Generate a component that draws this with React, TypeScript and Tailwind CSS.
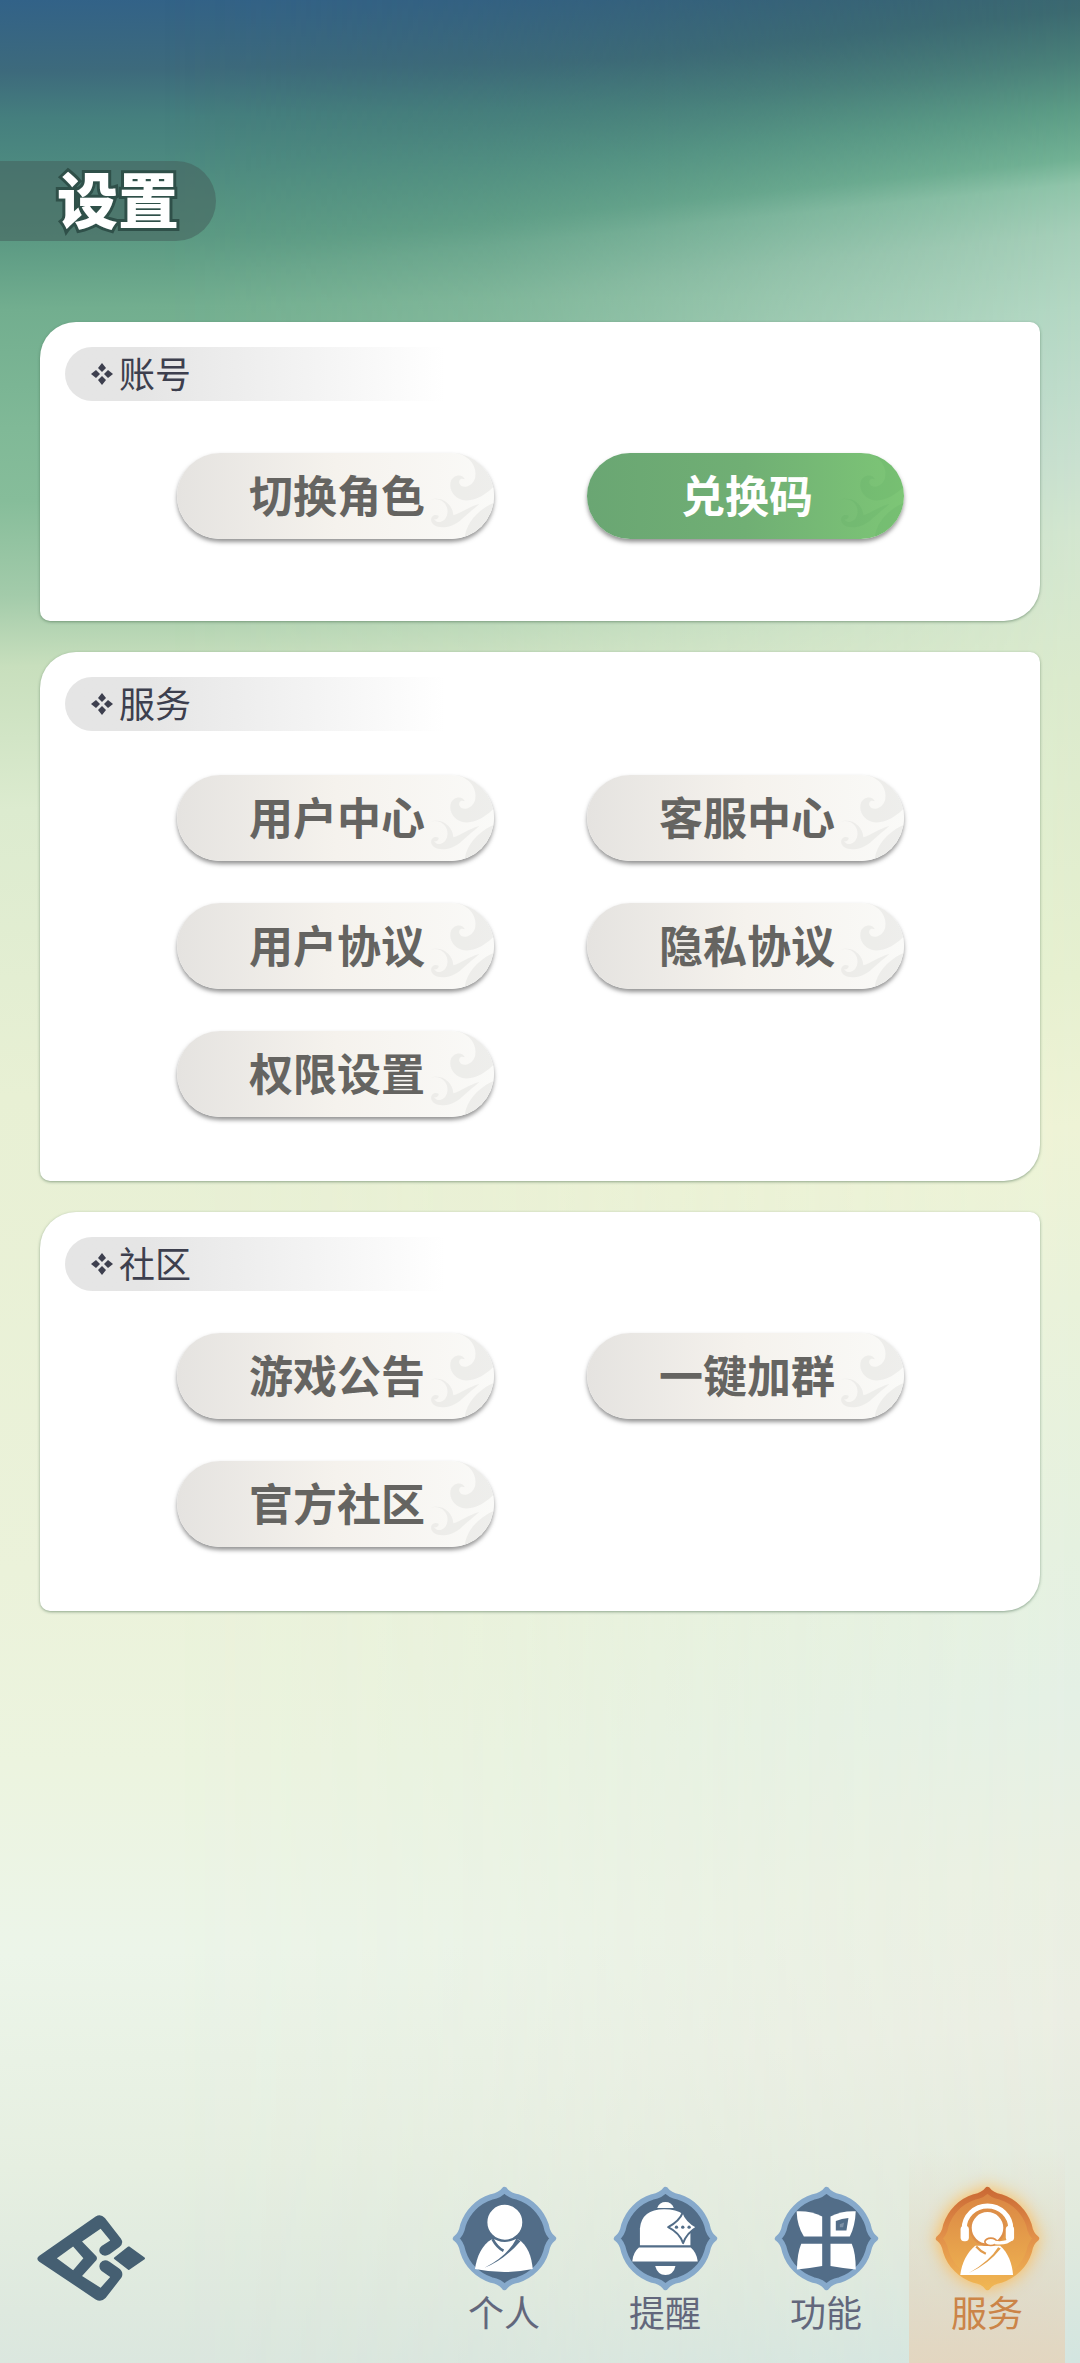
import React, { useState } from 'react';
import clsx from 'clsx';

interface Action {
  label: string;
  primary?: boolean;
}

interface Section {
  title: string;
  actions: Action[];
  spacing: string;
}

const sections: Section[] = [
  {
    title: '账号',
    actions: [{ label: '切换角色' }, { label: '兑换码', primary: true }],
    spacing: 'pt-[52px] pb-[82px]',
  },
  {
    title: '服务',
    actions: [
      { label: '用户中心' },
      { label: '客服中心' },
      { label: '用户协议' },
      { label: '隐私协议' },
      { label: '权限设置' },
    ],
    spacing: 'pt-11 pb-16',
  },
  {
    title: '社区',
    actions: [{ label: '游戏公告' }, { label: '一键加群' }, { label: '官方社区' }],
    spacing: 'pt-[42px] pb-16',
  },
];

const BADGE =
  'M0 -147C7 -137 18 -129 40 -125A131 131 0 0 1 125 -40C129 -18 137 -7 147 0C137 7 129 18 125 40A131 131 0 0 1 40 125C18 129 7 137 0 147C-7 137 -18 129 -40 125A131 131 0 0 1 -125 40C-129 18 -137 7 -147 0C-137 -7 -129 -18 -125 -40A131 131 0 0 1 -40 -125C-18 -129 -7 -137 0 -147Z';

const Badge = ({ glow, children }: { glow?: boolean; children: React.ReactNode }) => (
  <svg
    viewBox="-158 -158 316 316"
    aria-hidden="true"
    className={clsx('size-[105px] overflow-visible', glow && 'drop-shadow-[0_0_9px_#ffb84d]')}
  >
    {glow && (
      <defs>
        <linearGradient id="rim" x1="0" y1="0" x2="0" y2="1">
          <stop offset="0" stopColor="#cb6a35" />
          <stop offset="0.5" stopColor="#e2914a" />
          <stop offset="1" stopColor="#f0b653" />
        </linearGradient>
        <linearGradient id="face" x1="0" y1="0" x2="0" y2="1">
          <stop offset="0" stopColor="#d98443" />
          <stop offset="1" stopColor="#f0b552" />
        </linearGradient>
      </defs>
    )}
    <path
      d={BADGE}
      fill={glow ? 'url(#face)' : '#526d88'}
      stroke={glow ? 'url(#rim)' : '#86a9cb'}
      strokeWidth="17"
      strokeLinejoin="round"
    />
    {children}
  </svg>
);

const PersonIcon = () => (
  <Badge>
    <path d="M-38 2C-68 18 -84 56 -89 92Q0 110 85 92C82 56 70 18 40 2Z" fill="#fff" />
    <circle cx="1" cy="-49" r="56" fill="#fff" stroke="#526d88" strokeWidth="7" />
    <path d="M-36 2Q-22 28 -3 37" fill="none" stroke="#526d88" strokeWidth="8" />
    <path d="M36 0Q8 54 -60 88Q-2 66 48 8Z" fill="#526d88" />
    <path d="M-16 15H18L0 33Z" fill="#fff" />
  </Badge>
);

const BellIcon = () => (
  <Badge>
    <path d="M-25 -92Q-18 -110 0 -110Q18 -110 25 -92Z" fill="#fff" />
    <path d="M-77 20V-30Q-72 -88 -4 -88Q70 -88 75 -30V20Z" fill="#fff" />
    <path d="M-80 27H76Q94 42 97 69H-100Q-98 42 -80 27Z" fill="#fff" />
    <path d="M-31 83H30Q24 110 0 110Q-24 110 -31 83Z" fill="#fff" />
    <path
      d="M53 -80Q62 -52 95 -34Q64 -17 53 14Q42 -17 8 -34Q42 -52 53 -80Z"
      fill="#fff"
      stroke="#526d88"
      strokeWidth="6"
      strokeLinejoin="round"
    />
    <g fill="#526d88">
      <circle cx="33" cy="-34" r="5" />
      <circle cx="52" cy="-34" r="5" />
      <circle cx="71" cy="-34" r="5" />
    </g>
  </Badge>
);

const FeatureIcon = () => (
  <Badge>
    <g fill="#fff">
      <path d="M-90 -82Q-46 -84 -13 -66V-6H-68Q-88 -36 -90 -82Z" />
      <path d="M12 -66Q46 -84 88 -82Q86 -36 70 -6H12Z" />
      <path d="M-76 16H-13V83Q-50 90 -89 93Q-88 44 -76 16Z" />
      <path d="M12 16H76Q88 44 88 93Q50 90 12 83Z" />
    </g>
    <path d="M28 -53Q46 -61 66 -62L60 -24H28Z" fill="#526d88" />
    <path d="M40 -43L53 -48L50 -34H40Z" fill="#7d91a6" />
  </Badge>
);

const ServiceIcon = () => (
  <Badge glow>
    <path d="M-37 22C-62 42 -78 76 -82 110H77C74 76 62 42 38 22Z" fill="#fff" />
    <circle cx="0" cy="-32" r="51" fill="#fff" stroke="#dd8f49" strokeWidth="7" />
    <path d="M-70 -30A70 68 0 0 1 70 -30" fill="none" stroke="#fff" strokeWidth="15" />
    <rect x="-81" y="-38" width="25" height="46" rx="11" fill="#fff" />
    <rect x="55" y="-38" width="25" height="46" rx="11" fill="#fff" />
    <ellipse cx="10" cy="10" rx="18" ry="11" fill="#fff" stroke="#dd8f49" strokeWidth="5" />
    <path d="M22 12Q58 16 70 2" fill="none" stroke="#fff" strokeWidth="10" />
    <path d="M-34 24Q-20 40 -5 46" fill="none" stroke="#e09a4c" strokeWidth="7" />
    <path d="M32 26Q8 66 -56 104Q4 76 40 30Z" fill="#e3a04d" />
  </Badge>
);

const tabs = [
  { label: '个人', Icon: PersonIcon },
  { label: '提醒', Icon: BellIcon },
  { label: '功能', Icon: FeatureIcon },
  { label: '服务', Icon: ServiceIcon },
];

const Logo = () => (
  <svg viewBox="108 101 332 264" aria-hidden="true" className="h-[88px] w-[110px]">
    <path
      fill="#455f72"
      fillRule="evenodd"
      d="M118 226L288 108Q303 99 316 112L364 174Q374 189 360 200L330 222Q312 232 301 218Q295 205 306 197L332 180L303 145L247 183L290 228Q294 234 290 240L247 287L303 323L332 290L306 272Q295 262 302 248Q312 234 330 244L358 264Q374 276 366 292L318 354Q304 368 288 358L118 244Q106 235 118 226ZM171 234L220 270L251 234L220 198Z"
    />
    <path
      fill="#455f72"
      stroke="#455f72"
      strokeWidth="6"
      strokeLinejoin="round"
      d="M346 234L388 201L434 234L388 266Z"
    />
  </svg>
);

// Cloud ornament on the right end of a button
const Swirl = ({ primary }: { primary?: boolean }) => (
  <svg
    viewBox="40 9 210 258"
    aria-hidden="true"
    className={clsx(
      'absolute top-0 right-0 h-full w-[70px]',
      primary ? 'text-[#5dab66]/20' : 'text-[#dddcda]/40'
    )}
    fill="currentColor"
  >
    <path d="M135 9C175 15 202 50 193 85C184 113 152 118 146 100C143 90 151 82 162 88C157 72 128 72 120 96C113 126 142 158 180 150C208 146 235 125 250 108V9Z" />
    <path d="M55 150C92 138 118 166 109 196C102 220 76 222 70 206C76 210 84 206 84 198C74 190 58 198 62 214C72 240 118 236 148 212C170 192 190 176 206 162C170 172 150 190 128 196C126 164 96 136 55 150Z" />
    <path d="M162 267C164 222 200 180 250 158V267Z" />
  </svg>
);

const ActionButton = ({ label, primary }: Action) => (
  <button
    type="button"
    className={clsx(
      'relative h-[86px] w-[317px] overflow-hidden rounded-full pb-1 pl-1 text-[44px] leading-[60px] font-bold shadow-[0_3px_4px_rgba(60,60,60,0.55)]',
      primary
        ? 'bg-linear-to-r from-[#6aa673] via-[#70af74] to-[#7dc676] text-white'
        : 'bg-linear-to-r from-[#e5e3e0] via-[#f5f2ed] to-[#fafaf8] text-[#656461]'
    )}
  >
    <Swirl primary={primary} />
    <span className="relative">{label}</span>
  </button>
);

const SectionCard = ({ title, actions, spacing }: Section) => (
  <section className="rounded-tl-[36px] rounded-tr-[10px] rounded-br-[36px] rounded-bl-[10px] bg-white px-[25px] pt-[25px] shadow-[0_1px_3px_rgba(50,90,60,0.5)]">
    <div className="flex h-[54px] w-[380px] items-center gap-[6px] rounded-l-full bg-linear-to-r from-[#e5e5e5] from-20% to-white pl-[26px]">
      <svg viewBox="0 0 22 22" aria-hidden="true" className="size-[22px]" fill="#3d3f4e">
        <path d="M11 0L15 5L11 9L7 5ZM11 13L15 17L11 22L7 17ZM0 11L5 7L9 11L5 15ZM13 11L17 7L22 11L17 15Z" />
      </svg>
      <h2 className="pb-1 text-4xl font-normal text-[#3d3f4e]">{title}</h2>
    </div>
    <div className={clsx('flex justify-center', spacing)}>
      <div className="grid grid-cols-2 gap-x-[93px] gap-y-[42px]">
        {actions.map((action) => (
          <ActionButton key={action.label} {...action} />
        ))}
      </div>
    </div>
  </section>
);

const App = () => {
  const [active, setActive] = useState('服务');

  return (
    <div className="relative isolate flex min-h-screen flex-col font-['Noto_Sans_CJK_SC',sans-serif]">
      {/* Sky: left tones below, right tones faded in on top */}
      <div className="absolute inset-0 -z-20 bg-[linear-gradient(179deg,#326288_0%,#3d6a7c_3%,#457f7e_5%,#4d8a80_7%,#5b9983_10%,#72ae8f_13%,#80b997_18%,#86bd9a_21%,#a3cbaa_25%,#c8dfbd_28%,#dcebcf_34%,#e8f0d4_46%,#ebf2da_66%,#ecf4df_74%,#ecf5e9_82%,#e6efe1_91%,#dae6de_100%)]" />
      <div className="absolute inset-0 -z-10 bg-[linear-gradient(174deg,#345c74_2%,#3c6a70_5%,#4a8079_7%,#5c9c86_9%,#72b294_11%,#90c5aa_12%,#a6cfb9_14%,#b4d8c4_17%,#bfdccb_20%,#c9e0d0_23%,#d3e6d0_26%,#dbeacd_32%,#e6f0d0_44%,#eef3d6_50%,#e9f2da_57%,#e5f1e0_67%,#e4f0e5_73%,#eaf0e2_80%,#ebeee3_86%,#e2eadd_94%,#d3e5e0_100%)] mask-[linear-gradient(to_right,transparent_15%,rgba(0,0,0,0.25)_45%,rgba(0,0,0,0.7)_75%,black)]" />

      <header className="flex pt-[161px]">
        <h1 className="h-20 rounded-r-full bg-[#46605c]/55 pr-[37px] pl-[57px] text-[61px] leading-[74px] font-black text-white [paint-order:stroke_fill] [-webkit-text-stroke:6px_#2f5049]">
          设置
        </h1>
      </header>

      <main className="flex flex-col gap-[31px] px-10 pt-[81px]">
        {sections.map((section) => (
          <SectionCard key={section.title} {...section} />
        ))}
      </main>

      <footer className="mt-auto flex items-end justify-between pr-[15px] pl-9">
        <button type="button" aria-label="返回" className="mb-[61px]">
          <Logo />
        </button>
        <nav className="flex gap-[5px]">
          {tabs.map(({ label, Icon }) => (
            <button
              key={label}
              type="button"
              onClick={() => setActive(label)}
              className={clsx(
                'flex w-[156px] flex-col items-center pt-9 pb-8 text-4xl',
                active === label
                  ? 'bg-linear-to-b from-transparent to-[#e3d6c0] text-[#cb8448]'
                  : 'text-[#62677c]'
              )}
            >
              <Icon />
              <span className="leading-[40px]">{label}</span>
            </button>
          ))}
        </nav>
      </footer>
    </div>
  );
};

export default App;
